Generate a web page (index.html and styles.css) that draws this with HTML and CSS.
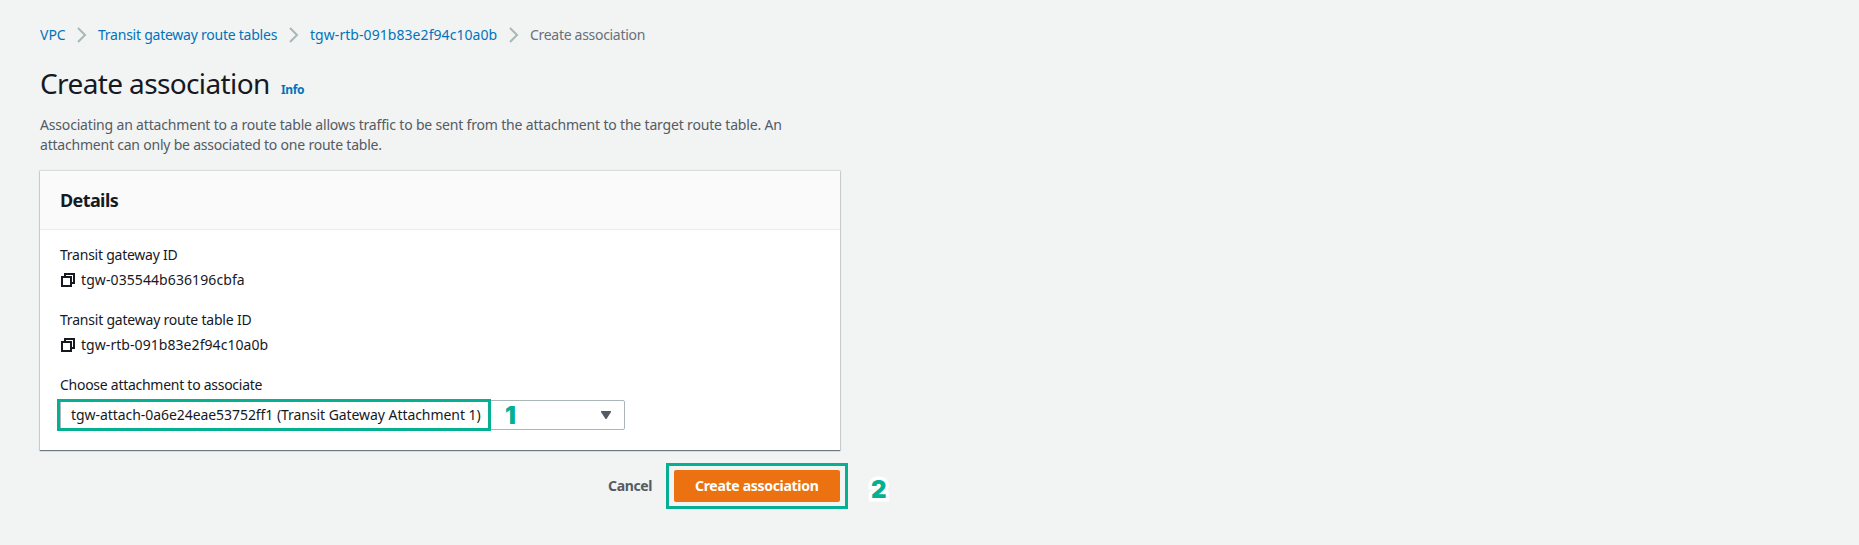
FILE: index.html
```html
<!DOCTYPE html>
<html lang="en">
<head>
<meta charset="utf-8">
<title>Create association</title>
<link rel="stylesheet" href="styles.css">
</head>
<body>
<main class="page">
  <nav class="breadcrumb">
    <a class="crumb crumb-vpc">VPC</a>
    <svg class="chevron" viewBox="0 0 10 16"><path d="M1 1l7 7-7 7"/></svg>
    <a class="crumb crumb-tables">Transit gateway route tables</a>
    <svg class="chevron" viewBox="0 0 10 16"><path d="M1 1l7 7-7 7"/></svg>
    <a class="crumb crumb-table">tgw-rtb-091b83e2f94c10a0b</a>
    <svg class="chevron" viewBox="0 0 10 16"><path d="M1 1l7 7-7 7"/></svg>
    <span class="crumb-current">Create association</span>
  </nav>
  <header class="heading">
    <h1 class="title">Create association</h1>
    <a class="info">Info</a>
  </header>
  <p class="description"><span class="line-one">Associating an attachment to a route table allows traffic to be sent from the attachment to the target route table. An</span><br><span class="line-two">attachment can only be associated to one route table.</span></p>
  <section class="card">
    <div class="card-header"><h2 class="card-title">Details</h2></div>
    <div class="card-body">
      <div class="field">
        <div class="label label-gateway">Transit gateway ID</div>
        <div class="value"><svg class="copy" viewBox="0 0 14 14"><path d="M4 4V1h9v9h-3M1 4h9v9H1z"/></svg><span class="gateway-id">tgw-035544b636196cbfa</span></div>
      </div>
      <div class="field">
        <div class="label label-table">Transit gateway route table ID</div>
        <div class="value"><svg class="copy" viewBox="0 0 14 14"><path d="M4 4V1h9v9h-3M1 4h9v9H1z"/></svg><span class="table-id">tgw-rtb-091b83e2f94c10a0b</span></div>
      </div>
      <div class="field">
        <div class="label label-choose">Choose attachment to associate</div>
        <div class="select">
          <span class="select-text">tgw-attach-0a6e24eae53752ff1 (Transit Gateway Attachment 1)</span>
          <svg class="caret" viewBox="0 0 10 8"><path d="M0 0h10v1L5.5 8h-1L0 1z"/></svg>
          <span class="marker marker-select"></span>
          <span class="step step-one">1</span>
        </div>
      </div>
    </div>
  </section>
  <footer class="actions">
    <a class="cancel">Cancel</a>
    <div class="submit"><span class="submit-text">Create association</span><span class="marker marker-submit"></span><span class="step step-two">2</span></div>
  </footer>
</main>
</body>
</html>
```
FILE: styles.css
```css
* { box-sizing: border-box; }
body {
  margin: 0;
  height: 545px;
  background: #f2f3f3;
  color: #16191f;
  font: 14px/20px "Noto Sans", "Open Sans", sans-serif;
  white-space: nowrap;
}
.page { width: 840px; padding: 25px 0 0 40px; }
.breadcrumb { display: flex; align-items: center; height: 20px; color: #687078; }
.crumb, .info { color: #0073bb; }
.crumb-vpc { width: 26px; }
.crumb-tables { width: 180px; letter-spacing: -.24px; }
.crumb-table { width: 188px; letter-spacing: .06px; }
.crumb-current { letter-spacing: -.3px; }
.chevron { width: 10px; height: 16px; margin: 0 11px; fill: none; stroke: #aab7b8; stroke-width: 2; flex: none; }
.heading { display: flex; align-items: baseline; height: 36px; margin-top: 20px; }
.title { margin: 0; width: 241px; font-size: 28px; line-height: 36px; font-weight: 400; letter-spacing: -.62px; }
.info { font-size: 12px; font-weight: 700; letter-spacing: -.4px; }
.description { margin: 14px 0 0; color: #545b64; }
.line-one { letter-spacing: -.175px; }
.line-two { letter-spacing: -.21px; }
.card {
  width: 800px; height: 279px; margin-top: 16px; background: #fff;
  box-shadow: 0 1px 1px 0 rgba(0,28,36,.5), 0 0 1px 1px rgba(0,28,36,.1);
}
.card-header { height: 59px; padding: 18px 20px; background: #fafafa; border-bottom: 1px solid #eaeded; }
.card-title { margin: 0; font-size: 18px; line-height: 22px; font-weight: 700; letter-spacing: -.6px; }
.card-body { padding: 15px 20px; display: flex; flex-direction: column; gap: 20px; }
.field { display: flex; flex-direction: column; gap: 5px; }
.label, .value { height: 20px; }
.label-gateway { letter-spacing: -.24px; }
.label-table { letter-spacing: -.21px; }
.label-choose { letter-spacing: -.27px; }
.value { display: flex; align-items: center; gap: 6px; padding-left: 1px; }
.gateway-id { letter-spacing: .09px; }
.table-id { letter-spacing: .06px; }
.copy { width: 14px; height: 14px; fill: none; stroke: #16191f; stroke-width: 2; }
.select {
  position: relative; display: flex; align-items: center; justify-content: space-between;
  width: 565px; height: 30px; padding: 0 13px 0 10px; border: 1px solid #aab7b8; border-radius: 2px;
}
.select-text { letter-spacing: -.06px; }
.caret { width: 10px; height: 8px; fill: #545b64; }
.marker { position: absolute; border: 3px solid #05b092; }
.marker-select { left: -4px; top: -2px; width: 434px; height: 32px; }
.marker-submit { left: -8px; top: -7px; width: 182px; height: 46px; }
.step {
  position: absolute; font: 900 24px/24px Inter, sans-serif; color: #05b092;
  -webkit-text-stroke: 7px #fff; paint-order: stroke fill; stroke-linejoin: round;
}
.step-one { left: 444px; top: 3px; }
.step-two { left: 197px; top: 8px; }
.actions { display: flex; justify-content: flex-end; align-items: center; margin-top: 20px; font-weight: 700; }
.cancel { width: 66px; color: #545b64; letter-spacing: -.35px; }
.submit { position: relative; width: 166px; height: 32px; padding: 6px 21px; background: #ec7211; color: #fff; border-radius: 2px; }
.submit-text { letter-spacing: -.3px; }
```
